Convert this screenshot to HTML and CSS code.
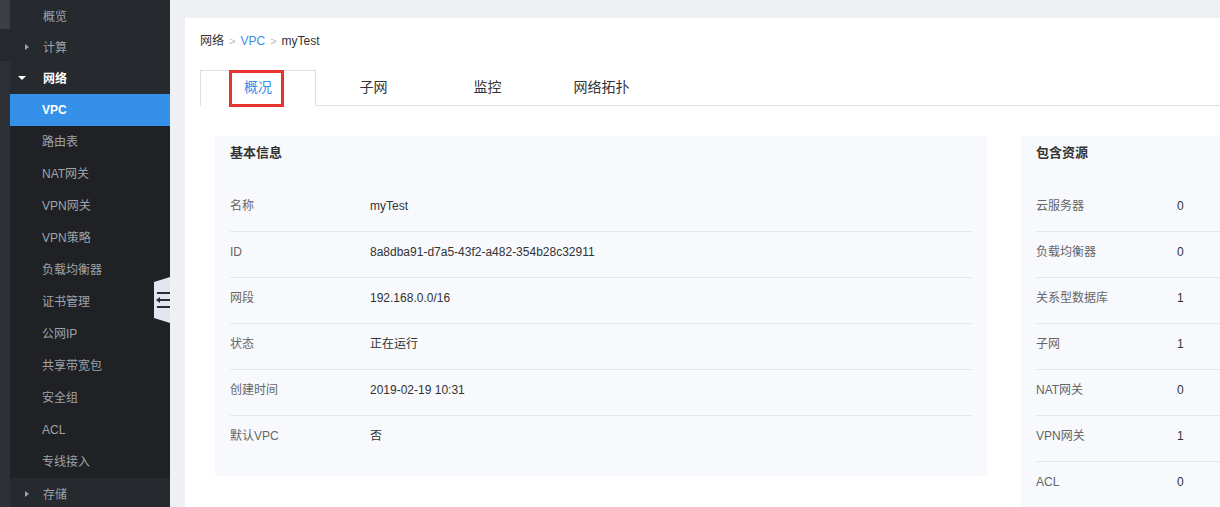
FILE: index.html
```html
<!DOCTYPE html>
<html lang="zh">
<head>
<meta charset="utf-8">
<title>VPC - myTest</title>
<link rel="stylesheet" href="styles.css">
</head>
<body>
<div class="app">
  <div class="scrollbar"><div class="thumb-a"></div><div class="thumb-b"></div><div class="thumb-c"></div></div>
  <nav class="sidebar">
    <div class="nav-item">概览</div>
    <div class="nav-item"><span class="arrow-right"></span>计算</div>
    <div class="nav-item open"><span class="arrow-down"></span>网络</div>
    <div class="submenu">
      <div class="sub-item active">VPC</div>
      <div class="sub-item">路由表</div>
      <div class="sub-item">NAT网关</div>
      <div class="sub-item">VPN网关</div>
      <div class="sub-item">VPN策略</div>
      <div class="sub-item">负载均衡器</div>
      <div class="sub-item">证书管理</div>
      <div class="sub-item">公网IP</div>
      <div class="sub-item">共享带宽包</div>
      <div class="sub-item">安全组</div>
      <div class="sub-item">ACL</div>
      <div class="sub-item">专线接入</div>
    </div>
    <div class="nav-item"><span class="arrow-right"></span>存储</div>
  </nav>
  <div class="collapse-handle">
    <svg width="16" height="46" viewBox="0 0 16 46">
      <polygon points="0,5 16,0 16,46 0,41" fill="#e1e6ef"/>
      <rect x="3" y="15" width="13" height="2" fill="#2a2d33"/>
      <rect x="6" y="22" width="10" height="2" fill="#2a2d33"/>
      <polygon points="2,23 6,20 6,26" fill="#2a2d33"/>
      <rect x="3" y="29" width="13" height="2" fill="#2a2d33"/>
    </svg>
  </div>
  <main class="main">
    <div class="card">
      <div class="breadcrumb">
        <span class="crumb">网络</span><span class="sep">&gt;</span><span class="crumb link">VPC</span><span class="sep">&gt;</span><span class="crumb">myTest</span>
      </div>
      <div class="tabs">
        <div class="tab active">概况<span class="highlight"></span></div>
        <div class="tab t2">子网</div>
        <div class="tab t3">监控</div>
        <div class="tab t4">网络拓扑</div>
      </div>
      <div class="panels">
        <section class="panel basic">
          <h3 class="panel-title">基本信息</h3>
          <div class="row"><span class="label">名称</span><span class="value">myTest</span></div>
          <div class="row"><span class="label">ID</span><span class="value">8a8dba91-d7a5-43f2-a482-354b28c32911</span></div>
          <div class="row"><span class="label">网段</span><span class="value">192.168.0.0/16</span></div>
          <div class="row"><span class="label">状态</span><span class="value">正在运行</span></div>
          <div class="row"><span class="label">创建时间</span><span class="value">2019-02-19 10:31</span></div>
          <div class="row last"><span class="label">默认VPC</span><span class="value">否</span></div>
        </section>
        <section class="panel resources">
          <h3 class="panel-title">包含资源</h3>
          <div class="row"><span class="label">云服务器</span><span class="value">0</span></div>
          <div class="row"><span class="label">负载均衡器</span><span class="value">0</span></div>
          <div class="row"><span class="label">关系型数据库</span><span class="value">1</span></div>
          <div class="row"><span class="label">子网</span><span class="value">1</span></div>
          <div class="row"><span class="label">NAT网关</span><span class="value">0</span></div>
          <div class="row"><span class="label">VPN网关</span><span class="value">1</span></div>
          <div class="row"><span class="label">ACL</span><span class="value">0</span></div>
        </section>
      </div>
    </div>
  </main>
</div>
</body>
</html>
```

FILE: styles.css
```css
* { box-sizing: border-box; }
html, body {
  margin: 0;
  padding: 0;
  width: 1220px;
  height: 507px;
  overflow: hidden;
  font-family: "Liberation Sans", "Noto Sans CJK SC", sans-serif;
  font-size: 12px;
  color: #333;
}
.app {
  position: relative;
  display: flex;
  width: 1220px;
  height: 507px;
  overflow: hidden;
  background: #eef0f4;
}
.scrollbar {
  width: 10px;
  flex: 0 0 10px;
  display: flex;
  flex-direction: column;
}
.thumb-a { height: 29px; background: #3b3e44; }
.thumb-b { height: 32px; background: #25282d; }
.thumb-c { flex: 1; background: #2d3037; }

.sidebar {
  width: 160px;
  flex: 0 0 160px;
  background: #26292e;
  height: 520px;
}
.nav-item {
  position: relative;
  height: 31px;
  line-height: 34px;
  padding-left: 33px;
  color: #9fa3a9;
  font-size: 12px;
}
.nav-item.open { color: #fff; font-weight: bold; height: 32px; }
.arrow-right {
  position: absolute;
  left: 15px;
  top: 13px;
  width: 0; height: 0;
  border-top: 3px solid transparent;
  border-bottom: 3px solid transparent;
  border-left: 4px solid #9fa3a9;
}
.arrow-down {
  position: absolute;
  left: 8px;
  top: 14px;
  width: 0; height: 0;
  border-left: 4px solid transparent;
  border-right: 4px solid transparent;
  border-top: 4px solid #fff;
}
.submenu { background: #1f2125; }
.sub-item {
  height: 32px;
  line-height: 32px;
  padding-left: 32px;
  color: #9fa3a9;
}
.sub-item.active {
  background: #3490e8;
  color: #fff;
  font-weight: bold;
}

.collapse-handle {
  position: absolute;
  left: 154px;
  top: 277px;
  width: 16px;
  height: 46px;
}
.collapse-handle svg { display: block; }

.main {
  flex: 1;
  padding: 18px 0 0 15px;
  min-width: 0;
}
.card {
  background: #fff;
  width: 1100px;
  height: 600px;
  padding: 13px 15px 0 15px;
}
.breadcrumb {
  height: 20px;
  line-height: 20px;
  font-size: 12px;
}
.crumb { color: #333; }
.crumb.link { color: #3a8ee6; }
.sep { color: #b8bcc4; margin: 0 5px; font-size: 11px; }

.tabs {
  display: flex;
  margin-top: 19px;
  border-bottom: 1px solid #dcdfe6;
  height: 36px;
}
.tab {
  position: relative;
  width: 113px;
  height: 36px;
  line-height: 35px;
  text-align: center;
  font-size: 14px;
  color: #333;
}
.tab.t2 { width: 115px; }
.tab.t4 { width: 115px; }
.tab.active {
  border: 1px solid #dcdfe6;
  border-bottom: 1px solid #fff;
  background: #fff;
  color: #3a8ee6;
  width: 116px;
  line-height: 33px;
}
.highlight {
  position: absolute;
  left: 28px;
  top: -1px;
  width: 55px;
  height: 37px;
  border: 3px solid #e8332f;
}

.panels {
  display: flex;
  align-items: flex-start;
  gap: 34px;
  margin-top: 30px;
  padding-left: 15px;
}
.panel {
  background: #f7f9fc;
  padding: 7px 15px 14px 15px;
  flex: 0 0 auto;
}
.panel.basic { width: 772px; }
.panel.resources { width: 260px; height: 400px; }
.panel-title {
  margin: 0 0 23px 0;
  font-size: 13px;
  line-height: 20px;
  font-weight: bold;
  color: #333;
}
.row {
  display: flex;
  padding: 12px 0 17px 0;
  line-height: 16px;
  border-bottom: 1px solid #e4e7ec;
}
.row.last { border-bottom: none; padding-bottom: 18px; }
.label {
  color: #666;
  width: 140px;
  flex: 0 0 140px;
}
.resources .label { width: 141px; flex: 0 0 141px; }
.value { color: #333; }
```
